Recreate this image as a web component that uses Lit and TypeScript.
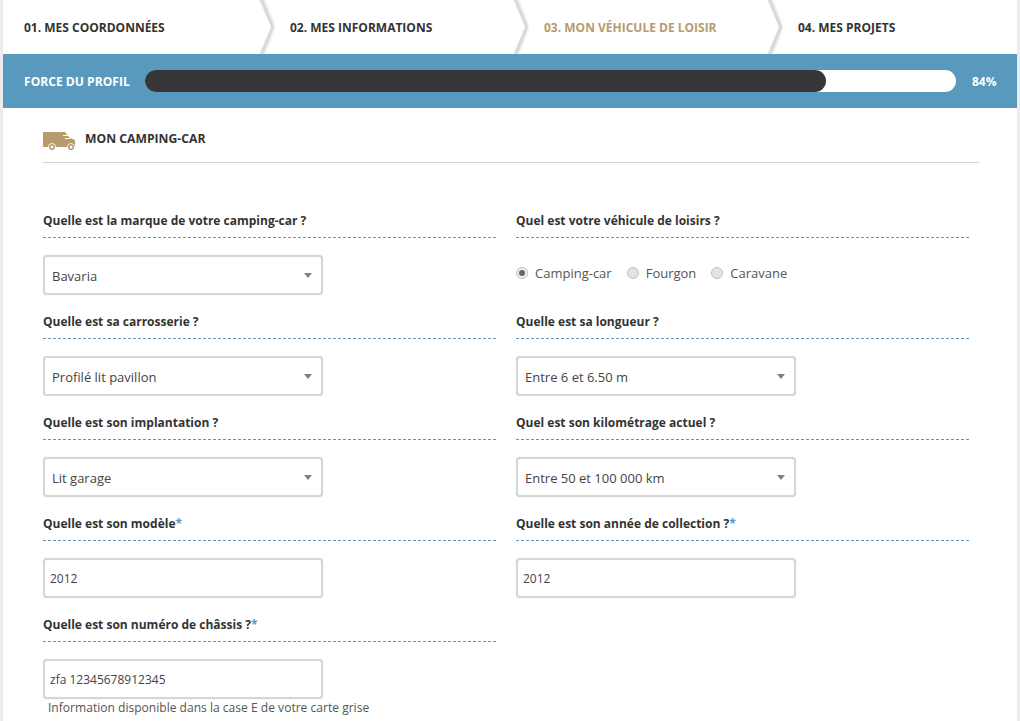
import { LitElement, html, css } from "lit";
import { customElement } from "lit/decorators.js";

@customElement("app-root")
export class AppRoot extends LitElement {
  static styles = css`
    :host { display: block; width: 1020px; height: 721px; overflow: hidden; background: #fff; font-family: "Open Sans", sans-serif; color: #333; }
    * { box-sizing: border-box; }
    .page { margin: 0 3px; height: 721px; background: #fff; box-shadow: 0 0 0 3px #ececec; }
    .steps { display: grid; grid-template-columns: 266px 254px 254px 1fr; height: 54px; }
    .step { position: relative; display: flex; align-items: center; padding-left: 21px; font-size: 12px; font-weight: 700; color: #333; white-space: nowrap; }
    .step.active { color: #b79b6d; }
    .chev { position: absolute; right: -6px; top: 0; width: 26px; height: 54px; z-index: 1; }
    .bar { display: flex; align-items: center; height: 54px; background: #5899bd; padding-left: 21px; color: #fff; font-size: 12px; font-weight: 700; }
    .bar-label { width: 121px; white-space: nowrap; font-size: 12.1px; }
    .track { width: 811px; height: 22px; border-radius: 11px; background: #fff; }
    .fill { height: 22px; border-radius: 11px; background: #363638; }
    .pct { margin-left: 16px; }
    .content { padding: 0 38px 0 40px; }
    .title { display: flex; align-items: center; gap: 10px; height: 55px; padding-top: 6px; border-bottom: 1px solid #d2d2d2; font-size: 12.2px; font-weight: 700; color: #333; }
    .title svg { margin-top: 6px; }
    .grid { display: grid; grid-template-columns: 453px 453px; column-gap: 20px; row-gap: 10px; padding-top: 41px; }
    .lbl { height: 34px; padding-top: 8px; line-height: 17px; font-size: 12px; font-weight: 700; color: #333; border-bottom: 1px dashed #5899bd; margin-bottom: 17px; white-space: nowrap; }
    .lbl span { color: #5899bd; }
    .ctl { display: flex; align-items: center; justify-content: space-between; width: 280px; height: 40px; border: 2px solid #d6d6d6; border-radius: 4px; background: #fff; font-size: 12px; color: #444; padding: 0 7px 0 5px; box-shadow: 0 0 1px #cccccc; }
    .ctl.sel { padding: 1px 8px 0 7px; font-size: 13px; }
    .caret { width: 0; height: 0; margin: 0 1px; border-left: 4.5px solid transparent; border-right: 4.5px solid transparent; border-top: 5px solid #808080; }
    .radios { display: flex; align-items: center; height: 36px; font-size: 13px; color: #555; }
    .radio { display: flex; align-items: center; gap: 7px; margin-right: 15px; }
    .dot { width: 12px; height: 12px; border-radius: 50%; border: 1px solid #c0c0c0; background: #e4e4e4; display: flex; align-items: center; justify-content: center; }
    .dot.on { background: #f0f0f0; }
    .dot.on::after { content: ""; width: 6px; height: 6px; border-radius: 50%; background: #666; }
    .help { font-size: 12.07px; color: #555; padding-left: 5px; line-height: 16px; margin-top: 1px; white-space: nowrap; }
  `;

  private chev() {
    return html`<svg class="chev" viewBox="0 0 26 54">
      <defs><filter id="b" x="-50%" y="-10%" width="200%" height="120%"><feGaussianBlur stdDeviation="1.8" /></filter></defs>
      <polyline points="12,-2 23.5,27 12,56" fill="none" stroke="#c4c4c4" stroke-width="3" filter="url(#b)" />
      <polygon points="0,0 10,0 22,27 10,54 0,54" fill="#fff" />
    </svg>`;
  }

  private field(label: unknown, control: unknown) {
    return html`<div><div class="lbl">${label}</div>${control}</div>`;
  }
  private sel(v: string) {
    return html`<div class="ctl sel">${v}<i class="caret"></i></div>`;
  }
  private inp(v: string) {
    return html`<div class="ctl">${v}</div>`;
  }

  render() {
    const req = html`<span>*</span>`;
    const steps = ["01. MES COORDONNÉES", "02. MES INFORMATIONS", "03. MON VÉHICULE DE LOISIR", "04. MES PROJETS"];
    return html`<div class="page">
      <div class="steps">
        ${steps.map((s, i) => html`<div class="step ${i === 2 ? "active" : ""}">${s}${i < 3 ? this.chev() : ""}</div>`)}
      </div>
      <div class="bar">
        <div class="bar-label">FORCE DU PROFIL</div>
        <div class="track"><div class="fill" style="width:84%"></div></div>
        <div class="pct">84%</div>
      </div>
      <div class="content">
        <div class="title">
          <svg width="32" height="18" viewBox="0 0 32 18">
            <path fill="#b79b6d" d="M0 0H22L27 6L32 8V15H0z" />
            <rect x="20" y="3" width="5" height="1" fill="#fff" />
            <rect x="22" y="6" width="5" height="1" fill="#fff" />
            <circle cx="9" cy="15" r="3.8" fill="#fff" />
            <circle cx="28" cy="15" r="3.8" fill="#fff" />
            <circle cx="9" cy="15" r="2.3" fill="#fff" stroke="#b79b6d" stroke-width="1.6" />
            <circle cx="28" cy="15" r="2.3" fill="#fff" stroke="#b79b6d" stroke-width="1.6" />
          </svg>
          MON CAMPING-CAR
        </div>
        <div class="grid">
          ${this.field("Quelle est la marque de votre camping-car ?", this.sel("Bavaria"))}
          ${this.field("Quel est votre véhicule de loisirs ?", html`<div class="radios">
            <div class="radio"><i class="dot on"></i>Camping-car</div>
            <div class="radio"><i class="dot"></i>Fourgon</div>
            <div class="radio"><i class="dot"></i>Caravane</div>
          </div>`)}
          ${this.field("Quelle est sa carrosserie ?", this.sel("Profilé lit pavillon"))}
          ${this.field("Quelle est sa longueur ?", this.sel("Entre 6 et 6.50 m"))}
          ${this.field("Quelle est son implantation ?", this.sel("Lit garage"))}
          ${this.field("Quel est son kilométrage actuel ?", this.sel("Entre 50 et 100 000 km"))}
          ${this.field(html`Quelle est son modèle${req}`, this.inp("2012"))}
          ${this.field(html`Quelle est son année de collection ?${req}`, this.inp("2012"))}
          <div>
            ${this.field(html`Quelle est son numéro de châssis ?${req}`, this.inp("zfa 12345678912345"))}
            <div class="help">Information disponible dans la case E de votre carte grise</div>
          </div>
        </div>
      </div>
    </div>`;
  }
}
